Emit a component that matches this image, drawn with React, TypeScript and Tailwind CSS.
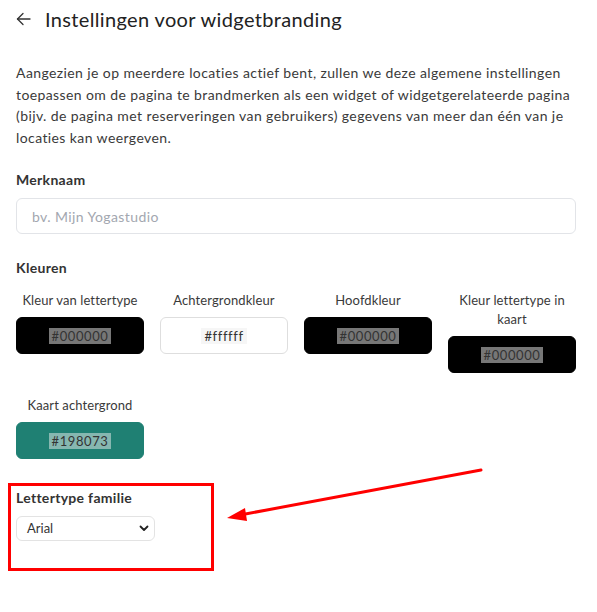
import React from "react";

const swatches: { label: React.ReactNode; hex: string; bg: string; border: string }[] = [
  { label: "Kleur van lettertype", hex: "#000000", bg: "bg-black", border: "border-black" },
  { label: "Achtergrondkleur", hex: "#ffffff", bg: "bg-white", border: "border-[#dedede]" },
  { label: "Hoofdkleur", hex: "#000000", bg: "bg-black", border: "border-black" },
  { label: "Kleur lettertype in kaart", hex: "#000000", bg: "bg-black", border: "border-black" },
  { label: "Kaart achtergrond", hex: "#198073", bg: "bg-[#1f8073]", border: "border-[#1f8073]" },
];

function Swatch({ label, hex, bg, border }: { label: React.ReactNode; hex: string; bg: string; border: string }) {
  return (
    <div className="flex flex-col items-center">
      <div className="text-[13px] leading-[19px] tracking-[0.1px] text-[#3a3a3a] text-center px-[6px]">{label}</div>
      <div className={`mt-[7px] w-full h-[37px] rounded-[6px] border ${border} ${bg} flex items-center justify-center`}>
        <span className="bg-[rgba(238,238,238,0.5)] text-[#333] text-[13px] leading-[16px] tracking-[0.6px] px-[3px]">{hex}</span>
      </div>
    </div>
  );
}

export default function App() {
  return (
    <div className="relative w-[597px] h-[612px] bg-white overflow-hidden" style={{ fontFamily: "Lato, 'Noto Sans', sans-serif" }}>
      <div className="ml-4 w-[560px] pt-[7px]">
        <div className="flex items-center h-6">
          <svg width="15" height="14" viewBox="0 0 15 14" fill="none" stroke="#333" strokeWidth="1.3" strokeLinecap="round" strokeLinejoin="round">
            <path d="M14 7H1.5" />
            <path d="M7 1.5L1.5 7L7 12.5" />
          </svg>
          <h1 className="ml-[14px] text-[20px] leading-6 tracking-[0.35px] text-[#222]">Instellingen voor widgetbranding</h1>
        </div>

        <p className="mt-[31px] text-[14px] leading-[21.5px] tracking-[0.4px] text-[#3a3a3a] whitespace-nowrap">
          Aangezien je op meerdere locaties actief bent, zullen we deze algemene instellingen
          <br />
          toepassen om de pagina te brandmerken als een widget of widgetgerelateerde pagina
          <br />
          (bijv. de pagina met reserveringen van gebruikers) gegevens van meer dan één van je
          <br />
          locaties kan weergeven.
        </p>

        <div className="mt-[22px] text-[14px] leading-5 font-bold tracking-[0.3px] text-[#333]">Merknaam</div>
        <div className="mt-2 h-9 rounded-[6px] border border-[#e2e4e8] flex items-center px-[15px]">
          <span className="text-[14px] tracking-[0.4px] text-[#a3a7b0]">bv. Mijn Yogastudio</span>
        </div>

        <div className="mt-6 text-[14px] leading-5 font-bold tracking-[0.3px] text-[#333]">Kleuren</div>
        <div className="mt-[13px] grid grid-cols-4 gap-x-4 gap-y-[23px] items-start">
          {swatches.map((s, i) => (
            <Swatch key={i} label={s.label} hex={s.hex} bg={s.bg} border={s.border} />
          ))}
        </div>

        <div className="mt-[29px] text-[14px] leading-5 font-bold tracking-[0.3px] text-[#333]">Lettertype familie</div>
        <div className="mt-2 w-[139px] h-[25px] rounded-[6px] border border-[#e3e3e3] flex items-center justify-between pl-[10px] pr-[5px]">
          <span className="text-[13px] text-[#333]">Arial</span>
          <svg width="10" height="7" viewBox="0 0 10 7" fill="none" stroke="#222" strokeWidth="1.8" strokeLinecap="round" strokeLinejoin="round">
            <path d="M1.5 1.5L5 5L8.5 1.5" />
          </svg>
        </div>
      </div>

      <div className="absolute left-[8px] top-[483px] w-[206px] h-[88px] border-[3px] border-[#ff0000]" />
      <svg className="absolute left-0 top-0 pointer-events-none" width="597" height="612">
        <line x1="481" y1="470" x2="240" y2="515" stroke="#ff0000" strokeWidth="3" strokeLinecap="round" />
        <polygon points="227,518 245,508 247,521" fill="#ff0000" />
      </svg>
    </div>
  );
}
